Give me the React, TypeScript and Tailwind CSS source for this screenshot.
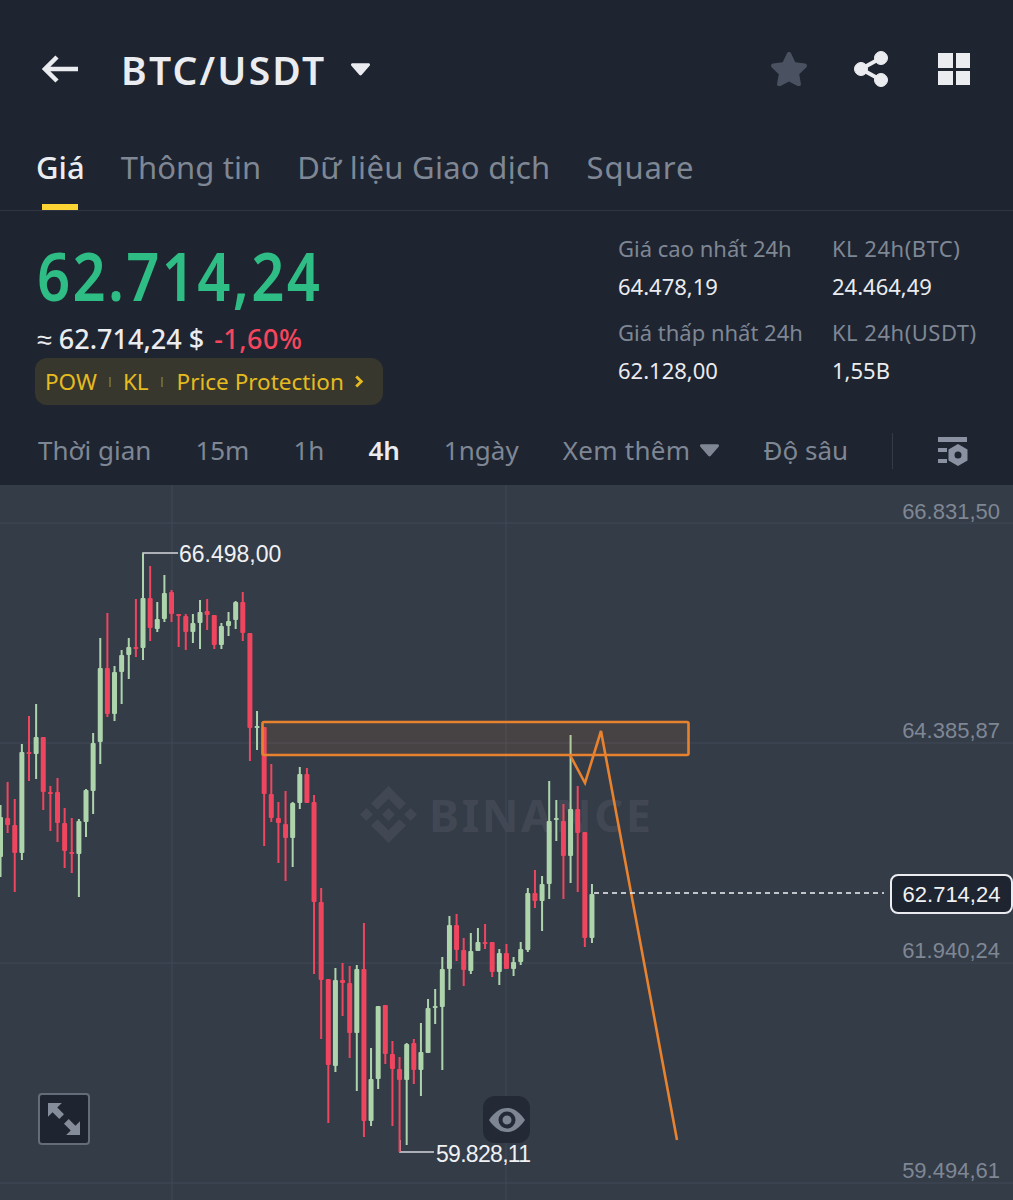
const GREEN = "#aed4ac";
const RED = "#f0455f";

// [high, bodyTop, bodyBottom, low, isRed], y in page pixels
const candles: [number, number, number, number, number][] = [
  [805, 817, 857, 877, 0], [782, 818, 825, 833, 1], [799, 825, 853, 892, 1], [744, 752, 853, 860, 0],
  [716, 752, 754, 781, 1], [704, 737, 754, 779, 0], [737, 737, 792, 810, 1], [786, 792, 794, 831, 1],
  [778, 792, 823, 842, 1], [808, 823, 851, 868, 1], [818, 852, 854, 873, 1], [819, 821, 854, 897, 0],
  [789, 790, 822, 837, 0], [733, 743, 791, 814, 0], [638, 668, 742, 764, 0], [613, 668, 714, 717, 1],
  [666, 672, 714, 721, 0], [650, 655, 672, 704, 0], [638, 647, 655, 679, 0], [599, 647, 649, 657, 1],
  [553, 598, 648, 660, 0], [566, 598, 628, 641, 1], [602, 619, 629, 632, 0], [575, 593, 619, 622, 0],
  [590, 592, 614, 622, 1], [614, 614, 616, 647, 1], [614, 616, 632, 650, 1], [614, 623, 632, 643, 0],
  [600, 612, 623, 649, 0], [599, 611, 615, 630, 1], [615, 615, 645, 649, 1], [623, 626, 645, 649, 0],
  [612, 621, 626, 636, 0], [601, 602, 620, 629, 0], [592, 602, 633, 641, 1], [633, 633, 728, 761, 1],
  [711, 726, 728, 750, 0], [727, 727, 794, 846, 1], [764, 794, 818, 822, 1], [802, 818, 823, 863, 1],
  [791, 824, 838, 881, 1], [802, 803, 838, 867, 0], [767, 774, 803, 809, 0], [768, 774, 803, 803, 1],
  [795, 802, 902, 974, 1], [888, 902, 980, 1039, 1], [979, 979, 1065, 1123, 1], [968, 980, 1066, 1072, 0],
  [963, 980, 983, 1016, 1], [966, 983, 1033, 1058, 1], [965, 969, 1033, 1091, 0], [923, 969, 1121, 1137, 1],
  [1048, 1079, 1121, 1126, 0], [1006, 1006, 1079, 1089, 0], [1005, 1005, 1054, 1064, 1], [1041, 1054, 1069, 1126, 1],
  [1057, 1069, 1080, 1152, 1], [1043, 1044, 1080, 1145, 0], [1039, 1043, 1070, 1084, 1], [1023, 1052, 1070, 1096, 0],
  [999, 1008, 1053, 1053, 0], [989, 1006, 1008, 1024, 0], [957, 969, 1007, 1070, 0], [916, 925, 969, 990, 0],
  [914, 925, 950, 961, 1], [938, 950, 970, 986, 1], [933, 951, 971, 974, 0], [928, 942, 951, 951, 0],
  [924, 942, 944, 949, 1], [942, 942, 972, 977, 1], [949, 953, 972, 985, 0], [944, 953, 969, 969, 1],
  [957, 962, 969, 976, 0], [942, 949, 962, 965, 0], [888, 893, 950, 952, 0], [870, 893, 901, 908, 1],
  [876, 884, 901, 931, 0], [781, 821, 884, 899, 0], [800, 818, 820, 841, 0], [804, 821, 856, 899, 1],
  [735, 809, 856, 883, 0], [786, 809, 833, 892, 1], [832, 832, 938, 947, 1], [884, 894, 938, 943, 0],
];

const axisLabels = [
  { text: "66.831,50", top: 12 },
  { text: "64.385,87", top: 231 },
  { text: "61.940,24", top: 451 },
  { text: "59.494,61", top: 671 },
];

function Stat({ label, value, tracking = "" }: { label: string; value: string; tracking?: string }) {
  return (
    <div>
      <div className={`text-[22px] leading-[30px] text-[#7f8794] whitespace-nowrap ${tracking}`}>{label}</div>
      <div className="mt-[8px] text-[22px] leading-[30px] text-[#eaecef] whitespace-nowrap">{value}</div>
    </div>
  );
}

function Caret({ className }: { className: string }) {
  return (
    <svg viewBox="0 0 20 13" className={className} fill="currentColor">
      <path d="M1.5 0h17c1.300 0 2 1.500 1.100 2.500l-8.500 9.800c-.6.700-1.600.700-2.200 0L.4 2.500C-.5 1.500.2 0 1.500 0z" />
    </svg>
  );
}

function Chart() {
  return (
    <div className="relative h-[715px] overflow-hidden bg-[#343c48] font-['Liberation_Sans',sans-serif]">
      {/* watermark sits under the candles */}
      <div className="absolute left-[360px] top-[301px] flex items-center gap-[12px] font-['Noto_Sans',sans-serif] text-[#424853]">
        <svg viewBox="0 0 32 32" className="h-[57px] w-[57px]" fill="currentColor">
          <path d="M16 0l9.800 9.800-3.600 3.600L16 7.200l-6.200 6.200-3.600-3.600zM3.600 12.400L7.200 16l-3.600 3.600L0 16zM28.400 12.400L32 16l-3.600 3.600-3.600-3.600zM16 12.400l3.600 3.600-3.600 3.600-3.600-3.600zM9.800 18.600l6.200 6.200 6.200-6.200 3.600 3.600L16 32l-9.800-9.800z" />
        </svg>
        <span className="text-[45px] font-bold leading-none tracking-[2.700px]">BINANCE</span>
      </div>

      <svg viewBox="0 485 1013 715" className="absolute inset-0 h-[715px] w-[1013px]">
        {[523, 743, 963, 1183].map((y) => (
          <line key={y} x1="0" x2="1013" y1={y} y2={y} stroke="#424956" strokeWidth="1" />
        ))}
        {[172, 506].map((x) => (
          <line key={x} x1={x} x2={x} y1="485" y2="1200" stroke="#424956" strokeWidth="1" />
        ))}

        <path d="M143 606V553H178" fill="none" stroke="#d5d8dc" strokeWidth="1.500" />
        <path d="M400 1140V1152H434" fill="none" stroke="#d5d8dc" strokeWidth="1.500" />

        {candles.map(([high, top, bottom, low, red], i) => {
          const x = 0.5 + 7.126 * i;
          const color = red ? RED : GREEN;
          return (
            <g key={i} fill={color}>
              <rect x={x - 1} y={high} width="2" height={low - high} />
              <rect x={x - 2.500} y={top} width="5" height={Math.max(bottom - top, 2)} rx="1" />
            </g>
          );
        })}

        <rect x="262.500" y="722" width="426" height="33" rx="1.500" fill="#e8822e" fillOpacity="0.11" stroke="#e8822e" strokeWidth="2.600" />
        <path d="M570 755L585 783L601 731L677 1140" fill="none" stroke="#e8822e" strokeWidth="2.600" />

        <line x1="594" x2="884" y1="893" y2="893" stroke="#f0f1f3" strokeWidth="1.300" strokeDasharray="5 4" />
      </svg>

      {axisLabels.map((a) => (
        <span key={a.text} className="absolute right-[13px] text-[22px] leading-[30px] text-[#7f8794]" style={{ top: a.top }}>
          {a.text}
        </span>
      ))}

      <span className="absolute left-[179px] top-[54px] text-[23px] leading-[30px] text-[#f0f1f3]">66.498,00</span>
      <span className="absolute left-[436px] top-[654px] text-[23px] leading-[30px] tracking-[-0.7px] text-[#f0f1f3]">59.828,11</span>

      <div className="absolute left-[890px] top-[389px] flex h-[40px] w-[123px] items-center justify-center rounded-[8px] border-2 border-[#eaecef] bg-[#1e2430] text-[22px] text-[#f0f1f3]">
        62.714,24
      </div>

      <div className="absolute left-[38px] top-[608px] flex h-[52px] w-[52px] items-center justify-center rounded-[4px] border-2 border-[#656c79] bg-[#1e2430]">
        <svg viewBox="0 0 30 30" className="h-[32px] w-[32px]" fill="#858c9a">
          <path d="M0 0h13L8.700 4.300 15 10.600 10.600 15 4.300 8.700 0 13zM30 30H17l4.300-4.300L15 19.400 19.400 15l6.300 6.300L30 17z" />
        </svg>
      </div>

      <div className="absolute left-[483px] top-[611px] flex h-[47px] w-[47px] items-center justify-center rounded-[12px] bg-[#242a35]">
        <svg viewBox="0 0 36 24" className="h-[24px] w-[36px]">
          <path d="M0 12C5 4.500 11 0 18 0s13 4.500 18 12c-5 7.500-11 12-18 12S5 19.500 0 12z" fill="#7e8593" />
          <circle cx="18" cy="12" r="8.500" fill="#242a35" />
          <circle cx="18" cy="12" r="4.500" fill="#7e8593" />
        </svg>
      </div>
    </div>
  );
}

export default function App() {
  return (
    <div className="flex h-[1200px] w-[1013px] flex-col overflow-hidden bg-[#1e2430] font-['Noto_Sans',sans-serif]">
      {/* Top bar */}
      <div className="flex h-[138px] items-center pl-[42px] pr-[43px]">
        <svg viewBox="0 0 36 28" className="h-[28px] w-[36px]" fill="none" stroke="#eaecef" strokeWidth="4.500">
          <path d="M36 14H3M15 2L3 14l12 12" />
        </svg>
        <h1 className="ml-[43px] text-[39px] font-semibold leading-none tracking-[2.200px] text-[#eaecef]">BTC/USDT</h1>
        <Caret className="ml-[25px] h-[13px] w-[19px] text-[#eaecef]" />
        <div className="ml-auto flex items-center">
          <svg viewBox="0 0 36 34" className="h-[34px] w-[36px]" fill="#4a5262">
            <path d="M18 0c.9 0 1.600.5 2 1.300l4.300 9 9.700 1.300c1.900.3 2.600 2.500 1.200 3.800l-7 6.800 1.700 9.600c.3 1.800-1.600 3.200-3.200 2.300L18 29.500l-8.700 4.600c-1.600.9-3.500-.5-3.200-2.300l1.700-9.600-7-6.800c-1.400-1.300-.7-3.500 1.200-3.800l9.700-1.300 4.300-9C16.400.5 17.100 0 18 0z" />
          </svg>
          <svg viewBox="0 0 34 36" className="ml-[47px] h-[36px] w-[34px]" fill="#eaecef" stroke="#eaecef">
            <circle cx="27" cy="7" r="6.500" />
            <circle cx="7" cy="18" r="6.500" />
            <circle cx="27" cy="29" r="6.500" />
            <path d="M27 7L7 18l20 11" fill="none" strokeWidth="4" />
          </svg>
          <div className="ml-[50px] grid grid-cols-2 gap-[3px]">
            <div className="h-[14.500px] w-[14.500px] bg-[#eaecef]" />
            <div className="h-[14.500px] w-[14.500px] bg-[#eaecef]" />
            <div className="h-[14.500px] w-[14.500px] bg-[#eaecef]" />
            <div className="h-[14.500px] w-[14.500px] bg-[#eaecef]" />
          </div>
        </div>
      </div>

      {/* Tabs */}
      <div className="flex h-[73px] items-start gap-[36px] border-b border-[#2f3542] pl-[36px] text-[31px] leading-[58px] text-[#7f8794]">
        <div className="relative h-[72px] font-medium text-[#eaecef]">
          Giá
          <div className="absolute bottom-0 left-[6px] h-[6px] w-[36px] bg-[#fcd535]" />
        </div>
        <div className="tracking-[0.1px]">Thông tin</div>
        <div className="tracking-[0.3px]">Dữ liệu Giao dịch</div>
        <div className="tracking-[0.9px]">Square</div>
      </div>

      {/* Price block */}
      <div className="flex h-[205px] justify-between pl-[35px] pr-[35px] pt-[22px]">
        <div>
          <div className="ml-[2px] origin-left scale-x-[0.88] text-[66px] font-semibold leading-[84px] tracking-[2.600px] text-[#2ebd85]">62.714,24</div>
          <div className="ml-[2px] mt-[5px] flex text-[27px] font-medium leading-[34px] text-[#eaecef]">
            <span>≈ 62.714,24 $</span>
            <span className="ml-[10px] tracking-[0.5px] text-[#f6465d]">-1,60%</span>
          </div>
          <div className="mt-[2px] flex h-[47px] w-[348px] items-center rounded-[12px] bg-[#38372d] pl-[10px] text-[22.500px] text-[#e6bb1f]">
            <span>POW</span>
            <span className="mx-[12px] h-[10px] w-[2px] bg-[#6d6433]" />
            <span>KL</span>
            <span className="ml-[12px] mr-[14px] h-[10px] w-[2px] bg-[#6d6433]" />
            <span>Price Protection</span>
            <svg viewBox="0 0 10 14" className="ml-[10px] h-[13px] w-[10px]" fill="none" stroke="#e6bb1f" strokeWidth="3">
              <path d="M2 1.500L7.500 7 2 12.500" />
            </svg>
          </div>
        </div>
        <div className="flex">
          <div className="flex w-[214px] flex-col gap-[16px]">
            <Stat label="Giá cao nhất 24h" value="64.478,19" />
            <Stat label="Giá thấp nhất 24h" value="62.128,00" />
          </div>
          <div className="flex w-[146px] flex-col gap-[16px]">
            <Stat label="KL 24h(BTC)" value="24.464,49" tracking="tracking-[0.5px]" />
            <Stat label="KL 24h(USDT)" value="1,55B" tracking="tracking-[0.5px]" />
          </div>
        </div>
      </div>

      {/* Intervals */}
      <div className="flex h-[69px] items-center gap-[44px] whitespace-nowrap pl-[38px] text-[26px] text-[#7f8794]">
        <span>Thời gian</span>
        <span>15m</span>
        <span>1h</span>
        <span className="font-semibold text-[#eaecef]">4h</span>
        <span>1ngày</span>
        <span className="flex items-center tracking-[0.3px]">
          Xem thêm
          <Caret className="ml-[10px] h-[13px] w-[19px] text-[#7f8794]" />
        </span>
        <span>Độ sâu</span>
        <div className="ml-auto mr-[45px] flex items-center gap-[45px]">
          <div className="h-[36px] w-px bg-[#353c47]" />
          <svg viewBox="0 0 30 30" className="h-[30px] w-[30px]" fill="#8a91a0">
            <path d="M0 1h29v5H0zM0 12h9v4H0zM0 23h9v4H0z" />
            <path fillRule="evenodd" d="M20 8l9.500 5.500v11L20 30l-9.500-5.500v-11zM20 15.500a3.500 3.500 0 100 7 3.500 3.500 0 000-7z" />
          </svg>
        </div>
      </div>

      <Chart />
    </div>
  );
}
